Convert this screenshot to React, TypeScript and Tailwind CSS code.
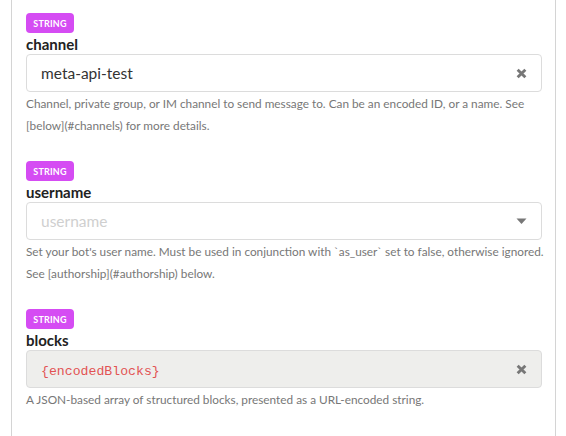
type Field = {
  name: string
  value?: string
  placeholder?: string
  kind: 'text' | 'select' | 'code'
  help: string[]
}

const fields: Field[] = [
  {
    name: 'channel',
    value: 'meta-api-test',
    kind: 'text',
    help: [
      'Channel, private group, or IM channel to send message to. Can be an encoded ID, or a name. See',
      '[below](#channels) for more details.',
    ],
  },
  {
    name: 'username',
    placeholder: 'username',
    kind: 'select',
    help: [
      "Set your bot's user name. Must be used in conjunction with `as_user` set to false, otherwise ignored.",
      'See [authorship](#authorship) below.',
    ],
  },
  {
    name: 'blocks',
    value: '{encodedBlocks}',
    kind: 'code',
    help: ['A JSON-based array of structured blocks, presented as a URL-encoded string.'],
  },
]

function ClearIcon() {
  return (
    <svg width="11" height="11" viewBox="0 0 10 10" className="text-[#777]">
      <path d="M1.5 1.5 L8.5 8.5 M8.5 1.5 L1.5 8.5" stroke="currentColor" strokeWidth="2.6" strokeLinecap="butt" />
    </svg>
  )
}

function Caret() {
  return (
    <svg width="11" height="7" viewBox="0 0 11 7" className="text-[#777]">
      <path d="M0.5 0.5 H10.5 L5.5 6 Z" fill="currentColor" />
    </svg>
  )
}

export default function App() {
  return (
    <div className="h-[436px] w-[566px] overflow-hidden bg-white font-['Lato',sans-serif]">
      <div className="ml-[11px] h-[436px] w-[545px] border-x border-[#d4d4d4] pl-[14px] pr-[13px] pt-[13px]">
        {fields.map((f) => (
          <div key={f.name} className="mb-[24px]">
            <div className="flex h-5 w-12 items-center justify-center rounded-[4px] bg-[#d54cf3] text-[9px] leading-none font-bold tracking-[0.02em] text-white">
              STRING
            </div>
            <div className="h-[21px] pt-[2px] text-[15px] font-bold leading-[19px] text-[#222]">{f.name}</div>
            <div
              className={`flex h-[38px] items-center rounded-[4px] border border-[#dcdcdc] pl-[14px] pr-[14px] ${
                f.kind === 'code' ? 'bg-[#eeeeec]' : 'bg-white'
              }`}
            >
              <div className="flex-1">
                {f.kind === 'code' ? (
                  <span className="font-['Liberation_Mono',monospace] text-[13.2px] text-[#e25353]">{f.value}</span>
                ) : f.value ? (
                  <span className="text-[15.5px] text-[#333]">{f.value}</span>
                ) : (
                  <span className="text-[15.5px] text-[#cfcfcf]">{f.placeholder}</span>
                )}
              </div>
              {f.kind === 'select' ? <Caret /> : <ClearIcon />}
            </div>
            <div className="pt-px text-[11.8px] leading-[22px] whitespace-nowrap text-[#777]">
              {f.help.map((line) => (
                <div key={line}>{line}</div>
              ))}
            </div>
          </div>
        ))}
      </div>
    </div>
  )
}
